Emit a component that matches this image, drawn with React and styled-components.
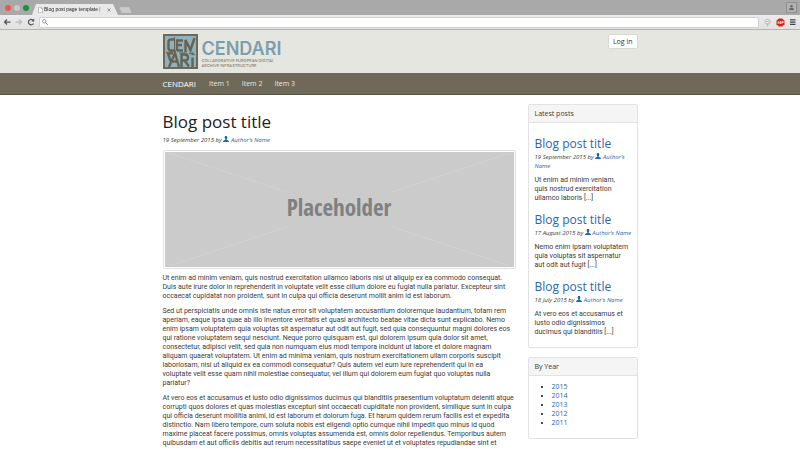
import React from "react";
import styled, { createGlobalStyle } from "styled-components";

const GlobalStyle = createGlobalStyle`
  *, *::before, *::after { box-sizing: border-box; }
  body {
    margin: 0;
    background: #fff;
    color: #3a3a3a;
    font: 7px/9px "Open Sans", "Noto Sans", sans-serif;
    overflow: hidden;
  }
  a { color: #2a66b0; text-decoration: none; }
  a:hover { text-decoration: underline; }
  h1, h2, h3, p, ul { margin: 0; font-weight: 400; }
  button, input { font: inherit; color: inherit; }
`;

/* Browser window */

const TabStrip = styled.div`
  display: flex;
  align-items: flex-end;
  height: 15px;
  padding: 0 3px 0 5px;
  background: #a9a9a9;
`;

const Lights = styled.div`
  display: flex;
  gap: 3px;
  align-self: center;
`;

const Light = styled.button`
  width: 6px;
  height: 6px;
  padding: 0;
  border: 0;
  border-radius: 50%;
  background: ${(p) => p.$color};
`;

const Tab = styled.div`
  display: flex;
  align-items: center;
  gap: 1px;
  width: 86px;
  height: 11px;
  margin-left: 3px;
  padding: 0 7px 0 6px;
  background: #e9e9e9;
  clip-path: polygon(0 100%, 4px 0, 81px 0, 100% 100%);
`;

const TabTitle = styled.span`
  flex: 1;
  overflow: hidden;
  white-space: nowrap;
  font: 5px/9px "Liberation Sans", sans-serif;
  color: #222;
  mask-image: linear-gradient(90deg, #000 85%, transparent);
`;

const NewTab = styled.button`
  width: 13px;
  height: 6px;
  margin: 0 0 2px 1px;
  padding: 0;
  border: 0;
  border-radius: 2px;
  background: #c9c9c9;
  clip-path: polygon(0 0, 10px 0, 100% 100%, 3px 100%);
`;

const IconButton = styled.button`
  display: grid;
  place-items: center;
  padding: 0;
  border: 0;
  background: none;
`;

const ProfileButton = styled(IconButton)`
  align-self: center;
  width: 11px;
  height: 11px;
  margin-left: auto;
  border: 1px solid #8f8f8f;
  background: #b2b2b2;
`;

const Toolbar = styled.div`
  display: flex;
  align-items: center;
  gap: 4px;
  height: 15px;
  padding: 0 4px 0 3px;
  background: linear-gradient(#ebebeb, #e2e2e2);
  border-bottom: 1px solid #b4b4b4;
`;

const Address = styled.label`
  flex: 1;
  display: flex;
  align-items: center;
  gap: 3px;
  height: 11px;
  padding: 0 2px;
  background: #fff;
  border: 1px solid #d2d2d2;
  border-radius: 2px;
`;

const AddressInput = styled.input`
  flex: 1;
  min-width: 0;
  height: 8px;
  padding: 0;
  border: 0;
  outline: 0;
  background: none;
`;

/* Site */

const Container = styled.div`
  width: 100%;
  max-width: 475px;
  margin: 0 auto;
`;

const Header = styled.header`
  background: #e6e6e1;
`;

const HeaderRow = styled(Container)`
  display: flex;
  justify-content: space-between;
  align-items: flex-start;
  padding: 4px 0;
`;

const Brand = styled.a`
  display: flex;
  gap: 4px;
  &:hover { text-decoration: none; }
`;

const BrandText = styled.span`
  display: flex;
  flex-direction: column;
  padding-top: 6px;
`;

const Wordmark = styled.span`
  font: 600 18px/18px Inter, sans-serif;
  color: #7a9fac;
`;

const Tagline = styled.span`
  font: 500 4px/5px Inter, sans-serif;
  color: #8a7f6c;
`;

const LoginButton = styled.button`
  height: 15px;
  padding: 0 4px;
  border: 1px solid #d8d8d4;
  border-radius: 2px;
  background: #fff;
  color: #333;
`;

const Navbar = styled.nav`
  background: #6f6959;
  border-bottom: 1px solid #5a5548;
`;

const NavRow = styled(Container)`
  display: flex;
  align-items: center;
  gap: 12px;
  height: 21px;
`;

const NavLink = styled.a`
  padding-right: ${(p) => (p.$brand ? "1px" : "0")};
  color: ${(p) => (p.$brand ? "#fff" : "#e9e7e1")};
  font-size: ${(p) => (p.$brand ? "8px" : "7px")};
`;

const Page = styled(Container)`
  display: grid;
  grid-template-columns: minmax(0, 353fr) minmax(0, 110fr);
  gap: 12px;
  align-items: start;
  padding-top: 9px;
`;

const Article = styled.article`
  padding-top: 6px;
`;

const Title = styled.h1`
  color: #222;
  font-size: 17px;
  line-height: 24px;
`;

const Meta = styled.p`
  margin-top: ${(p) => (p.$compact ? "1px" : "2px")};
  font-size: 6px;
  line-height: 9px;
  font-style: italic;
`;

const Figure = styled.div`
  display: grid;
  height: 119px;
  margin: 5px 0;
  padding: 1px;
  border: 1px solid #e2e2e2;
  border-radius: 2px;
`;

const Lines = styled.svg`
  grid-area: 1 / 1;
  width: 100%;
  height: 100%;
  min-height: 0;
  background: #cbcbcb;
`;

const FigureLabel = styled.span`
  grid-area: 1 / 1;
  place-self: center;
  padding-bottom: 5px;
  background: #cbcbcb;
  color: #808080;
  font: 700 23px/32px "Open Sans Condensed", "Open Sans", sans-serif;
`;

const Paragraph = styled.p`
  margin-bottom: 6px;
  font-family: Roboto, "Open Sans", sans-serif;
  white-space: pre-line;
`;

const Sidebar = styled.aside`
  display: grid;
  gap: 9px;
`;

const Panel = styled.section`
  border: 1px solid #e2e2e2;
  border-radius: 2px;
`;

const PanelTitle = styled.h2`
  padding: 4px 6px;
  border-bottom: 1px solid #e2e2e2;
  background: #f5f5f5;
  font-size: 7px;
  line-height: 9px;
`;

const PostList = styled.div`
  display: grid;
  gap: 9px;
  padding: 13px 5px 10px 6px;
`;

const PostTitle = styled.h3`
  font-size: 12px;
  line-height: 16px;
`;

const Excerpt = styled(Paragraph)`
  margin: 5px 0 0;
`;

const YearList = styled.ul`
  padding: 6px 6px 11px 23px;
`;

const YearItem = styled.li`
  &::marker { color: #111; }
`;

const Person = () => (
  <svg width="6" height="6" viewBox="0 0 12 12" aria-hidden="true">
    <path
      fill="#1c67ad"
      d="M6 0C4 0 3.200 1.400 3.300 3.200c.1 1.500.7 2.400 1.400 3.100v1.300C4.400 8.500.6 8.700.2 10.600V12h11.600v-1.400C11.400 8.700 7.600 8.500 7.300 7.600V6.300c.7-.7 1.300-1.600 1.400-3.100C8.800 1.400 8 0 6 0z"
    />
  </svg>
);

const Emblem = () => (
  <svg width="35" height="35" viewBox="0 0 35 35" aria-hidden="true">
    <rect width="35" height="35" fill="#6f6959" />
    <rect x="2" y="2" width="31" height="31" fill="#8cb3be" />
    <g fill="none" stroke="#6a6352" strokeWidth="2.400">
      <path d="M11 5.500H8Q5.500 5.500 5.500 8v6q0 2.500 2.500 2.500h3" />
      <path d="M20 6.500h-6V17M14 11h5M14 16.500h6" />
      <path d="M22.500 18V6l5 10L31.500 4" />
      <path d="M4 20l6-1M5.500 21l2 6M6 33l6-14 4 14M9 27.500h6" />
      <path d="M18.500 33V20.500H22q3 0 3 3t-3 3h-3.500M21.500 26.500l4.500 6" />
      <path d="M29.500 23.500V33M29.500 18.500v2.500" />
      <path strokeWidth="1" d="M3 18.500l9-1M16 19h8M26 19l6 2M11.500 3v14" />
    </g>
  </svg>
);

const Byline = ({ date, compact }) => (
  <Meta $compact={compact}>
    {date} by <Person /> <a href="#author">Author’s Name</a>
  </Meta>
);

const posts = [
  { date: "19 September 2015", text: "Ut enim ad minim veniam,\nquis nostrud exercitation\nullamco laboris [...]" },
  { date: "17 August 2015", text: "Nemo enim ipsam voluptatem quia voluptas sit aspernatur aut odit aut fugit [...]" },
  { date: "18 July 2015", text: "At vero eos et accusamus et iusto odio dignissimos ducimus qui blanditiis [...]" },
];

const paragraphs = [
  "Ut enim ad minim veniam, quis nostrud exercitation ullamco laboris nisi ut aliquip ex ea commodo consequat. Duis aute irure dolor in reprehenderit in voluptate velit esse cillum dolore eu fugiat nulla pariatur. Excepteur sint occaecat cupidatat non proident, sunt in culpa qui officia deserunt mollit anim id est laborum.",
  "Sed ut perspiciatis unde omnis iste natus error sit voluptatem accusantium doloremque laudantium, totam rem aperiam, eaque ipsa quae ab illo inventore veritatis et quasi architecto beatae vitae dicta sunt explicabo. Nemo enim ipsam voluptatem quia voluptas sit aspernatur aut odit aut fugit, sed quia consequuntur magni dolores eos qui ratione voluptatem sequi nesciunt. Neque porro quisquam est, qui dolorem ipsum quia dolor sit amet, consectetur, adipisci velit, sed quia non numquam eius modi tempora incidunt ut labore et dolore magnam aliquam quaerat voluptatem. Ut enim ad minima veniam, quis nostrum exercitationem ullam corporis suscipit laboriosam, nisi ut aliquid ex ea commodi consequatur? Quis autem vel eum iure reprehenderit qui in ea\nvoluptate velit esse quam nihil molestiae consequatur, vel illum qui dolorem eum fugiat quo voluptas nulla\npariatur?",
  "At vero eos et accusamus et iusto odio dignissimos ducimus qui blanditiis praesentium voluptatum deleniti atque corrupti quos dolores et quas molestias excepturi sint occaecati cupiditate non provident, similique sunt in culpa qui officia deserunt mollitia animi, id est laborum et dolorum fuga. Et harum quidem rerum facilis est et expedita distinctio. Nam libero tempore, cum soluta nobis est eligendi optio cumque nihil impedit quo minus id quod maxime placeat facere possimus, omnis voluptas assumenda est, omnis dolor repellendus. Temporibus autem quibusdam et aut officiis debitis aut rerum necessitatibus saepe eveniet ut et voluptates repudiandae sint et",
];

const years = [2015, 2014, 2013, 2012, 2011];

const BrowserChrome = () => (
  <div>
    <TabStrip>
      <Lights>
        <Light $color="#f2544f" aria-label="Close window" />
        <Light $color="#c9c9c9" aria-label="Minimise window" />
        <Light $color="#16933a" aria-label="Zoom window" />
      </Lights>
      <Tab>
        <svg width="5" height="6" viewBox="0 0 10 12" fill="#fff" stroke="#888" aria-hidden="true">
          <path d="M1 .5h5l3 3v8H1zM6 .5v3h3" />
        </svg>
        <TabTitle>Blog post page template |</TabTitle>
        <IconButton aria-label="Close tab">
          <svg width="4" height="4" viewBox="0 0 8 8" stroke="#777" strokeWidth="1.500">
            <path d="M1 1l6 6M7 1L1 7" />
          </svg>
        </IconButton>
      </Tab>
      <NewTab aria-label="New tab" />
      <ProfileButton aria-label="Profile">
        <svg width="7" height="7" viewBox="0 0 14 14" fill="#666">
          <circle cx="7" cy="4.500" r="2.500" />
          <path d="M2 12c0-3 2-4 5-4s5 1 5 4z" />
        </svg>
      </ProfileButton>
    </TabStrip>
    <Toolbar>
      <IconButton aria-label="Back">
        <svg width="8" height="8" viewBox="0 0 16 16" fill="none" stroke="#555" strokeWidth="2.500">
          <path d="M15 8H3M8 3L3 8l5 5" />
        </svg>
      </IconButton>
      <IconButton aria-label="Forward">
        <svg width="8" height="8" viewBox="0 0 16 16" fill="none" stroke="#bbb" strokeWidth="2.500">
          <path d="M1 8h12M8 3l5 5-5 5" />
        </svg>
      </IconButton>
      <IconButton aria-label="Reload">
        <svg width="8" height="8" viewBox="0 0 16 16" fill="none" stroke="#555" strokeWidth="2.500">
          <path d="M13 11a5.500 5.500 0 1 1-1-7" />
          <path d="M14.500 1v6h-6z" fill="#555" stroke="none" />
        </svg>
      </IconButton>
      <Address>
        <svg width="6" height="6" viewBox="0 0 12 12" fill="none" stroke="#777" strokeWidth="1.500" aria-hidden="true">
          <circle cx="4.500" cy="4.500" r="3.500" />
          <path strokeWidth="2" d="M7 7l4.500 4.500" />
        </svg>
        <AddressInput aria-label="Address" />
      </Address>
      <IconButton aria-label="Hints">
        <svg width="9" height="9" viewBox="0 0 18 18" fill="none" stroke="#aaa" strokeWidth="1.500">
          <path d="M5.500 11.500C2.500 10 3 2.500 9 2.500S15.500 10 12.500 11.500zM7 13.500h4M8 16h2M6 7h6" />
        </svg>
      </IconButton>
      <IconButton aria-label="Ad blocker">
        <svg width="9" height="9" viewBox="0 0 18 18">
          <path fill="#dd2212" d="M5.500 1h7L17 5.500v7L12.500 17h-7L1 12.500v-7z" />
          <path fill="none" stroke="#fff" strokeWidth="1.300" d="M3.500 11l1.500-4 1.500 4M4 10h2M8 7v4h2V7zM8 9h2M12 11.500V7h2.500v2H12" />
        </svg>
      </IconButton>
      <IconButton aria-label="Menu">
        <svg width="7" height="8" viewBox="0 0 14 16" stroke="#444" strokeWidth="2.500">
          <path d="M2 3.500h11M2 8h11M2 12.500h11" />
        </svg>
      </IconButton>
    </Toolbar>
  </div>
);

export default function App() {
  return (
    <>
      <GlobalStyle />
      <BrowserChrome />
      <Header>
        <HeaderRow>
          <Brand href="#home">
            <Emblem />
            <BrandText>
              <Wordmark>CENDARI</Wordmark>
              <Tagline>COLLABORATIVE EUROPEAN DIGITAL</Tagline>
              <Tagline>ARCHIVE INFRASTRUCTURE</Tagline>
            </BrandText>
          </Brand>
          <LoginButton>Log in</LoginButton>
        </HeaderRow>
      </Header>
      <Navbar>
        <NavRow>
          <NavLink $brand href="#home">CENDARI</NavLink>
          <NavLink href="#item-1">Item 1</NavLink>
          <NavLink href="#item-2">Item 2</NavLink>
          <NavLink href="#item-3">Item 3</NavLink>
        </NavRow>
      </Navbar>
      <Page as="main">
        <Article>
          <Title>Blog post title</Title>
          <Byline date="19 September 2015" />
          <Figure>
            <Lines viewBox="0 0 349 115" preserveAspectRatio="none" stroke="#d2d2d2" aria-hidden="true">
              <path d="M4 1l341 113M345 1L4 114" />
            </Lines>
            <FigureLabel>Placeholder</FigureLabel>
          </Figure>
          {paragraphs.map((text) => (
            <Paragraph key={text}>{text}</Paragraph>
          ))}
        </Article>
        <Sidebar>
          <Panel>
            <PanelTitle>Latest posts</PanelTitle>
            <PostList>
              {posts.map((post) => (
                <article key={post.date}>
                  <PostTitle>
                    <a href="#post">Blog post title</a>
                  </PostTitle>
                  <Byline date={post.date} compact />
                  <Excerpt>{post.text}</Excerpt>
                </article>
              ))}
            </PostList>
          </Panel>
          <Panel>
            <PanelTitle>By Year</PanelTitle>
            <YearList>
              {years.map((year) => (
                <YearItem key={year}>
                  <a href={`#${year}`}>{year}</a>
                </YearItem>
              ))}
            </YearList>
          </Panel>
        </Sidebar>
      </Page>
    </>
  );
}
